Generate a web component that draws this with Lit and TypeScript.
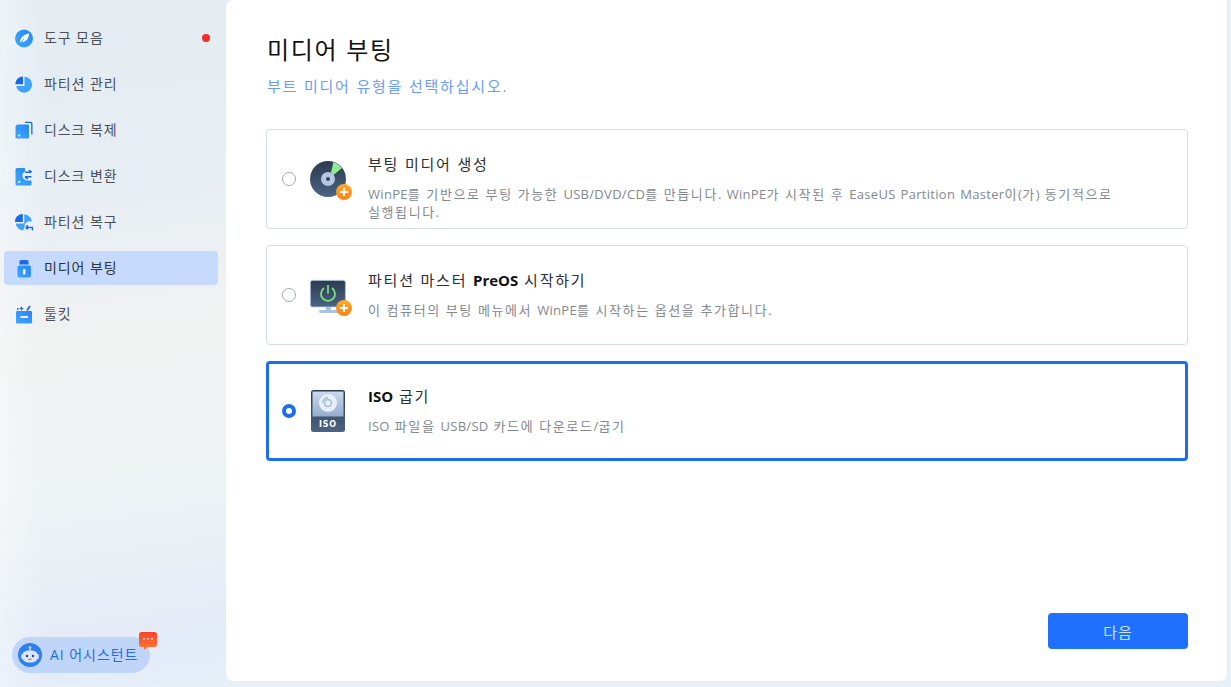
import { LitElement, html, css, svg } from "lit";
import { customElement } from "lit/decorators.js";

const navIcons = [
  svg`<circle cx="9" cy="9.500" r="9" fill="url(#nb)"/><path d="M4.800 14C5 9.500 8 5.500 14 4.500 14 10 10.500 13.200 6.800 13Z" fill="#fff"/><path d="M4.400 14.600 9 9.800" stroke="#2b8cf5" stroke-width=".8"/>`,
  svg`<path d="M9.500 1.700A8 8 0 1 1 1.200 11H9.500Z" fill="#3fa2fb"/><path d="M8 1.400V9.300H.3A7.700 7.700 0 0 1 8 1.400Z" fill="#1a68ea"/>`,
  svg`<path d="M10 .8H15.500a2 2 0 0 1 2 2V13.500h-1.300V3.200c0-.7-.4-1.100-1.100-1.100H10Z" fill="#1a68ea"/><path d="M3.500 3.500H13a1 1 0 0 1 1 1V16.500a1 1 0 0 1-1 1H1.500a1 1 0 0 1-1-1V6.500A3 3 0 0 1 3.500 3.500Z" fill="url(#nb)"/><circle cx="4.300" cy="14.600" r="1.100" fill="#fff"/>`,
  svg`<path d="M2 1H10V4.500C8 5.500 7 7.300 7.500 9.500S10 13.500 12 13.500H16.500V17a1.500 1.500 0 0 1-1.500 1.500H2A1.500 1.500 0 0 1 .5 17V2.500A1.500 1.500 0 0 1 2 1Z" fill="url(#nb)"/><circle cx="4.300" cy="15" r="1.100" fill="#fff"/><path d="M10 5.200H16.500M13.800 3 16.500 5.200M10 9.800H16.500M10 9.800 12.700 12" stroke="#1a68ea" stroke-width="1.600" fill="none"/>`,
  svg`<path d="M9.300 1.300A8 8 0 0 1 16.800 8.500 5.500 5.500 0 0 0 9.500 14.500L8 17.500A8 8 0 0 1 .7 10.500H9.300Z" fill="#3fa2fb"/><path d="M7.800 1V9H0A7.800 7.800 0 0 1 7.800 1Z" fill="#1a68ea"/><path d="M10.700 14.500H17.500V17.500M10.700 14.500 13 12.300M10.700 14.500 13 16.500" stroke="#1a68ea" stroke-width="1.500" fill="none"/>`,
  svg`<path d="M4.500 2.500A1.500 1.500 0 0 1 6 1H12A1.500 1.500 0 0 1 13.500 2.500V5.500H4.500Z" fill="#1a68ea"/><rect x="2.500" y="6.500" width="13.500" height="12" rx="2.200" fill="url(#nb)"/><rect x="8" y="10" width="2.400" height="5.500" rx=".8" fill="#fff"/>`,
  svg`<rect x="1" y="6" width="16" height="12.500" rx="1.200" fill="url(#nb)"/><rect x="5.500" y="11" width="7.500" height="1.800" fill="#fff"/><path d="M12 5.500 15 1" stroke="#1a68ea" stroke-width="1.800"/><path d="M6.500 1 7.200 2.800 9 3.500 7.200 4.200 6.500 6 5.800 4.200 4 3.500 5.800 2.800Z" fill="#1a68ea"/><circle cx="2.800" cy="4" r=".9" fill="#1a68ea"/>`,
];

const navLabels = ["도구 모음", "파티션 관리", "디스크 복제", "디스크 변환", "파티션 복구", "미디어 부팅", "툴킷"];

const plusBadge = svg`<circle cx="35" cy="35" r="8" fill="url(#po)"/><path d="M31 35H39M35 31V39" stroke="#fff" stroke-width="1.800"/>`;

const cardIcons = [
  svg`<circle cx="19" cy="22" r="18" fill="url(#dk)"/><path d="M22 15.500 24.500 5A18 18 0 0 1 33 11L24.500 18Z" fill="#8fec8f"/><circle cx="19" cy="22" r="7" fill="#b4c8e4"/><circle cx="19" cy="22" r="2" fill="#33435a"/>${plusBadge}`,
  svg`<rect x="1.400" y="7.400" width="35" height="26.500" rx="2" fill="url(#dk)" stroke="#a9c0dc" stroke-width=".8"/><rect x="17" y="34" width="5" height="3.500" fill="#a9c4e2"/><rect x="10" y="37" width="24" height="3" rx="1.500" fill="#a9c4e2"/><path d="M14.500 15.500A7 7 0 1 0 23.500 15.500" stroke="#7ee67e" stroke-width="1.700" fill="none" stroke-linecap="round"/><path d="M19 12.500V20" stroke="#7ee67e" stroke-width="1.700" stroke-linecap="round"/>${plusBadge}`,
  svg`<rect x="2" y="1" width="34" height="42" rx="2.500" fill="url(#dk)"/><rect x="3.500" y="2.500" width="31" height="25" fill="url(#lb)"/><circle cx="19" cy="14" r="9" fill="#e9eff8"/><circle cx="19" cy="14" r="3.500" fill="none" stroke="#a4b8d4" stroke-width="1.500"/><path d="M13.500 14A5.500 5.500 0 0 1 19 8.500" stroke="#a4b8d4" stroke-width="1.300" fill="none"/>`,
];

const cards = [
  { title: "부팅 미디어 생성", desc: "WinPE를 기반으로 부팅 가능한 USB/DVD/CD를 만듭니다. WinPE가 시작된 후 EaseUS Partition Master이(가) 동기적으로 실행됩니다." },
  { title: "파티션 마스터 PreOS 시작하기", desc: "이 컴퓨터의 부팅 메뉴에서 WinPE를 시작하는 옵션을 추가합니다." },
  { title: "ISO 굽기", desc: "ISO 파일을 USB/SD 카드에 다운로드/굽기", iso: true },
];

/** Hangul runs set wider than Latin ones, so each run gets its own span. */
const runs = (text: string) =>
  text.split(/([\uAC00-\uD7A3]+|\s+)/).filter(Boolean).map((part) =>
    /[\uAC00-\uD7A3\s]/.test(part) ? html`<span class="k">${part}</span>` : html`<span class="l">${part}</span>`
  );

@customElement("app-root")
export class AppRoot extends LitElement {
  static styles = css`
    :host {
      display: flex;
      width: 1231px;
      height: 687px;
      overflow: hidden;
      font-family: "Open Sans", "Noto Sans CJK KR", sans-serif;
      background: #e7eff7;
    }
    .side {
      width: 226px;
      flex: none;
      box-sizing: border-box;
      padding: 21px 8px 14px 4px;
      display: flex;
      flex-direction: column;
      background:
        linear-gradient(90deg, rgba(255, 255, 255, 0.35), rgba(255, 255, 255, 0) 45px),
        linear-gradient(172deg, #e4ecf2 0%, #e6eef4 25%, #f0f1f1 48%, #eef3f4 68%, #e8eff5 82%, #e3eaf8 93%, #e7f0f8 100%);
    }
    .nav { display: flex; flex-direction: column; gap: 12px; }
    .item {
      position: relative;
      height: 34px;
      display: flex;
      align-items: center;
      gap: 11px;
      padding-left: 11px;
      border-radius: 4px;
      font-size: 14px;
      color: #4b5058;
      letter-spacing: 0.9px;
    }
    .item.on { background: #c5dafc; color: #2d333b; }
    .item svg { width: 18px; height: 19px; flex: none; }
    .label { padding-bottom: 2px; }
    .dot { position: absolute; right: 8px; top: 13px; width: 8px; height: 8px; border-radius: 50%; background: #f22b2b; }
    .ai {
      position: relative;
      margin-top: auto;
      align-self: flex-start;
      margin-left: 8px;
      height: 36px;
      width: 138px;
      box-sizing: border-box;
      border-radius: 18px;
      background: #c0d6f9;
      display: flex;
      align-items: center;
      gap: 8px;
      padding-left: 6px;
      font-size: 14px;
      color: #1e6ce6;
      letter-spacing: 0.95px;
    }
    .bot { width: 24px; height: 24px; flex: none; }
    .ai .label { white-space: nowrap; }
    .bubble { position: absolute; left: 127px; top: -5px; width: 18px; height: 18px; }
    .main {
      width: 1001px;
      height: 681px;
      flex: none;
      box-sizing: border-box;
      background: #fff;
      border-radius: 8px 0 8px 8px;
      padding: 32px 39px 32px 40px;
      display: flex;
      flex-direction: column;
    }
    h1 { margin: 0 0 0 1px; font-size: 24px; line-height: 36px; font-weight: 400; color: #111; letter-spacing: 1.7px; }
    .sub { margin: 8px 0 0 1px; font-size: 15px; line-height: 20px; color: #6a9cf8; letter-spacing: 1.8px; }
    .cards { display: flex; flex-direction: column; gap: 16px; margin-top: 33px; }
    .card {
      height: 100px;
      box-sizing: border-box;
      border: 1px solid #d6dcea;
      border-radius: 4px;
      display: flex;
      align-items: center;
      padding-left: 15px;
    }
    .card.on { border: 3px solid #1d6df0; padding-left: 13px; }
    .radio { width: 14px; height: 14px; box-sizing: border-box; border: 1px solid #a3abb8; border-radius: 50%; flex: none; }
    .card.on .radio { border: 4px solid #1d6df0; }
    .art { width: 44px; height: 44px; margin-left: 13px; flex: none; }
    .txt { margin-left: 15px; width: 760px; align-self: flex-start; padding-top: 23px; }
    .card.on .txt { padding-top: 21px; }
    .title { font-size: 15px; line-height: 22px; color: #111; }
    .title .k { letter-spacing: 1.8px; color: #2a2e35; }
    .title .l { font-weight: 700; }
    .desc { margin-top: 10px; font-size: 13px; line-height: 18px; color: #83888f; word-break: keep-all; }
    .desc .k { letter-spacing: 1.6px; }
    .desc .l { letter-spacing: 0.3px; }
    .foot { margin-top: auto; display: flex; justify-content: flex-end; }
    .next {
      width: 140px;
      height: 36px;
      border: 0;
      border-radius: 4px;
      background: #2070ff;
      color: #cfe0ff;
      font: inherit;
      font-size: 15px;
      letter-spacing: 1px;
    }
    .defs { position: absolute; width: 0; height: 0; }
  `;

  render() {
    return html`
      <svg class="defs">
        <defs>
          <linearGradient id="nb" x1="0" y1="1" x2="1" y2="0"><stop offset="0" stop-color="#3fa8fb"/><stop offset="1" stop-color="#2585f4"/></linearGradient>
          <linearGradient id="dk" x1="0" y1="0" x2="0" y2="1"><stop offset="0" stop-color="#2b3a4f"/><stop offset="1" stop-color="#4b6483"/></linearGradient>
          <linearGradient id="lb" x1="0" y1="0" x2="0" y2="1"><stop offset="0" stop-color="#c9d9ef"/><stop offset="1" stop-color="#94acd0"/></linearGradient>
          <linearGradient id="po" x1="0" y1="0" x2="0" y2="1"><stop offset="0" stop-color="#ffa92e"/><stop offset="1" stop-color="#f98516"/></linearGradient>
          <linearGradient id="rd" x1="0" y1="0" x2="0" y2="1"><stop offset="0" stop-color="#f8432b"/><stop offset="1" stop-color="#ff7d33"/></linearGradient>
        </defs>
      </svg>
      <aside class="side">
        <nav class="nav">
          ${navLabels.map((l, i) => html`
            <div class="item ${i === 5 ? "on" : ""}">
              <svg viewBox="0 0 18 19">${navIcons[i]}</svg>
              <span class="label">${l}</span>
              ${i === 0 ? html`<span class="dot"></span>` : ""}
            </div>`)}
        </nav>
        <div class="ai">
          <svg class="bot" viewBox="0 0 24 24">
            <circle cx="12" cy="12" r="12" fill="#2f7fee"/>
            <path d="M12 4.500V8" stroke="#cfe0fb" stroke-width="1.200"/><circle cx="12" cy="4.500" r="1.300" fill="#cfe0fb"/>
            <rect x="3" y="11" width="2.500" height="5" rx="1.200" fill="#b9d0f6"/><rect x="18.500" y="11" width="2.500" height="5" rx="1.200" fill="#b9d0f6"/>
            <rect x="4" y="7.500" width="16" height="12" rx="6" fill="#dbe6fb"/>
            <circle cx="9" cy="13" r="1.200" fill="#24427f"/><circle cx="15" cy="13" r="1.200" fill="#24427f"/>
            <path d="M10.500 15.800Q12 17.200 13.500 15.800" stroke="#e0506a" stroke-width="1.100" fill="none"/>
          </svg>
          <span class="label">AI 어시스턴트</span>
          <svg class="bubble" viewBox="0 0 18 18">
            <path d="M2.500 0H15.500a2.500 2.500 0 0 1 2.500 2.500V12.500a2.500 2.500 0 0 1-2.500 2.500H9L5 18V15H2.500A2.500 2.500 0 0 1 0 12.500V2.500A2.500 2.500 0 0 1 2.500 0Z" fill="url(#rd)"/>
            <circle cx="5" cy="6.800" r=".9" fill="#fff"/><circle cx="9" cy="6.800" r=".9" fill="#fff"/><circle cx="13" cy="6.800" r=".9" fill="#fff"/>
          </svg>
        </div>
      </aside>
      <main class="main">
        <h1>미디어 부팅</h1>
        <div class="sub">부트 미디어 유형을 선택하십시오.</div>
        <div class="cards">
          ${cards.map((c, i) => html`
            <div class="card ${c.iso ? "on" : ""}">
              <span class="radio"></span>
              <svg class="art" viewBox="0 0 44 44">
                ${cardIcons[i]}
                ${c.iso ? svg`<text x="19" y="37.500" text-anchor="middle" font-family="DejaVu Sans" font-weight="700" font-size="8" letter-spacing=".8" fill="#fff">ISO</text>` : ""}
              </svg>
              <div class="txt">
                <div class="title">${runs(c.title)}</div>
                <div class="desc">${runs(c.desc)}</div>
              </div>
            </div>`)}
        </div>
        <div class="foot"><button class="next">다음</button></div>
      </main>
    `;
  }
}
